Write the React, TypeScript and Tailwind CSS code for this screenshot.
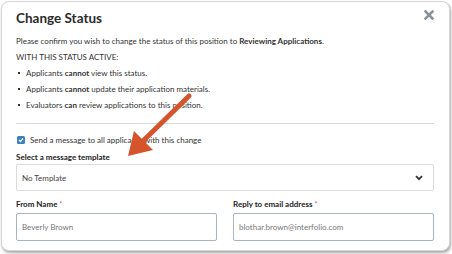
import React from "react";

export default function App() {
  return (
    <div className="w-[452px] h-[254px] bg-white pl-[1px] pt-[1px] pr-[2px] pb-[3px]" style={{ fontFamily: "Lato, 'Liberation Sans', sans-serif" }}>
      <div className="relative w-full h-full rounded-[8px] border border-[#d6d6d6] bg-white shadow-[1px_2px_3px_rgba(0,0,0,0.35)] pl-[14px] pr-[15px] pt-[7px] text-[#333]">
        <div className="flex items-start justify-between">
          <h1 className="text-[13.5px] font-bold leading-[18px] text-[#2b2b2b]">Change Status</h1>
          <svg width="10" height="10" viewBox="0 0 10 10" className="mt-[1px]">
            <path d="M1.5 1.5 L8.5 8.5 M8.5 1.5 L1.5 8.5" stroke="#8a929c" strokeWidth="2.6" strokeLinecap="square" />
          </svg>
        </div>
        <div className="mt-[6px] text-[8px] leading-[16px] text-[#333]">
          <p>
            Please confirm you wish to change the status of this position to <span className="font-bold">Reviewing Applications</span>.
          </p>
          <p>WITH THIS STATUS ACTIVE:</p>
          <ul className="pl-[2px]">
            <li className="flex items-center gap-[6px]">
              <span className="w-[2px] h-[2px] bg-[#333]"></span>
              <span>Applicants <span className="font-bold">cannot</span> view this status.</span>
            </li>
            <li className="flex items-center gap-[6px]">
              <span className="w-[2px] h-[2px] bg-[#333]"></span>
              <span>Applicants <span className="font-bold">cannot</span> update their application materials.</span>
            </li>
            <li className="flex items-center gap-[6px]">
              <span className="w-[2px] h-[2px] bg-[#333]"></span>
              <span>Evaluators <span className="font-bold">can</span> review applications to this position.</span>
            </li>
          </ul>
        </div>
        <div className="mt-[10px] h-px bg-[#d9d9d9]"></div>
        <div className="mt-[10px] flex items-center gap-[5px] text-[8px] leading-[12px]">
          <span className="ml-[1px] w-[8px] h-[8px] rounded-[1.5px] bg-[#3a7fc0] flex items-center justify-center">
            <svg width="6" height="6" viewBox="0 0 6 6">
              <path d="M1 3 L2.5 4.5 L5 1.5" stroke="white" strokeWidth="1.2" fill="none" />
            </svg>
          </span>
          <span>Send a message to all applicants with this change</span>
        </div>
        <div className="mt-[5px] text-[8px] font-bold leading-[12px] text-[#222]">Select a message template</div>
        <div className="mt-[1px] h-[27px] border border-[#dcdcdc] rounded-[2px] flex items-center justify-between pl-[5px] pr-[10px] text-[8px] text-[#444]">
          <span>No Template</span>
          <svg width="8" height="6" viewBox="0 0 8 6">
            <path d="M1 1.2 L4 4.2 L7 1.2" stroke="#333" strokeWidth="1.8" fill="none" />
          </svg>
        </div>
        <div className="mt-[7px] grid grid-cols-2 gap-x-[16px]">
          <div>
            <div className="text-[8px] font-bold leading-[12px] text-[#222]">
              From Name <span className="text-[#d9534f] align-top text-[7px] font-normal">*</span>
            </div>
            <div className="mt-[3px] h-[28px] border border-[#a8b4c2] rounded-[2px] flex items-center pl-[5px] text-[8px] text-[#777]">
              Beverly Brown
            </div>
          </div>
          <div>
            <div className="text-[8px] font-bold leading-[12px] text-[#222]">
              Reply to email address <span className="text-[#d9534f] align-top text-[7px] font-normal">*</span>
            </div>
            <div className="mt-[3px] h-[28px] border border-[#a8b4c2] rounded-[2px] flex items-center pl-[5px] text-[8px] text-[#777]">
              blothar.brown@interfolio.com
            </div>
          </div>
        </div>
        <svg className="absolute -left-[2px] -top-[2px] pointer-events-none" width="452" height="254" viewBox="0 0 452 254">
          <line x1="189" y1="96" x2="143" y2="141" stroke="#d5542c" strokeWidth="5" strokeLinecap="round" />
          <polygon points="128,156 134,131 153,150" fill="#d5542c" />
        </svg>
      </div>
    </div>
  );
}
